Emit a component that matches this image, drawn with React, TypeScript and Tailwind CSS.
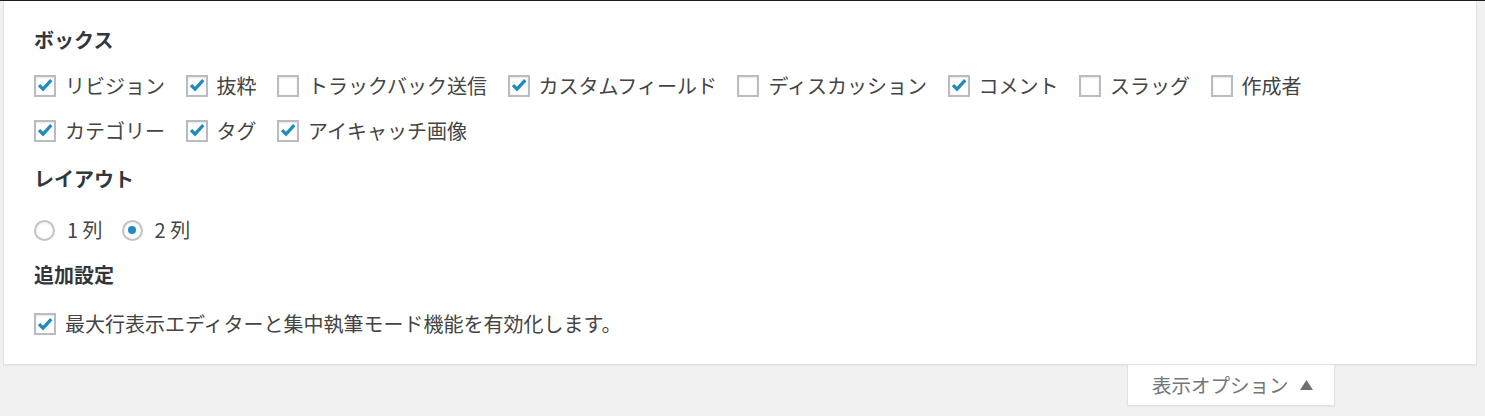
import React from "react";

const font = { fontFamily: '"Noto Sans CJK JP", "Noto Sans", sans-serif' };

const Check = () => (
  <svg viewBox="0 0 21 21" className="w-[19px] h-[19px]">
    <path d="M3.5 10 L8.2 14.8 L17.8 4.2" fill="none" stroke="#1e8cbe" strokeWidth="3.8" />
  </svg>
);

const Box = ({ label, checked }: { label: string; checked: boolean }) => (
  <label className="flex items-center mr-[20.5px]">
    <span className="w-[22px] h-[22px] border-2 border-[#b9bdc1] bg-white shadow-[inset_0_1px_2px_rgba(0,0,0,0.1)] flex items-center justify-center shrink-0">
      {checked && <Check />}
    </span>
    <span className="ml-[9px] whitespace-nowrap">{label}</span>
  </label>
);

const Radio = ({ label, checked }: { label: string; checked: boolean }) => (
  <label className="flex items-center mr-[19px]">
    <span className="w-[21px] h-[21px] rounded-full border-2 border-[#c1c4c7] bg-white shadow-[inset_0_1px_2px_rgba(0,0,0,0.1)] flex items-center justify-center shrink-0">
      {checked && <span className="w-[8px] h-[8px] rounded-full bg-[#1e8cbe]" />}
    </span>
    <span className="ml-[12px] whitespace-nowrap">{label}</span>
  </label>
);

const row1 = [
  { label: "リビジョン", checked: true },
  { label: "抜粋", checked: true },
  { label: "トラックバック送信", checked: false },
  { label: "カスタムフィールド", checked: true },
  { label: "ディスカッション", checked: false },
  { label: "コメント", checked: true },
  { label: "スラッグ", checked: false },
  { label: "作成者", checked: false },
];

const row2 = [
  { label: "カテゴリー", checked: true },
  { label: "タグ", checked: true },
  { label: "アイキャッチ画像", checked: true },
];

export default function App() {
  return (
    <div className="w-full h-[416px] bg-[#f1f1f1] overflow-hidden text-[20px] text-[#444]" style={font}>
      <div className="h-px bg-[#1d1d1d]" />
      {/* Screen options panel */}
      <div className="ml-[3px] mr-[8px] bg-white border border-t-0 border-[#e1e1e1] shadow-[0_1px_1px_rgba(0,0,0,0.04)] pl-[30px] pt-[27px] pb-[24px]">
        <h5 className="h-[24px] leading-[24px] font-bold text-[#32373c]">ボックス</h5>
        <div className="mt-[11px] flex h-[45px] items-center">
          {row1.map((b) => (
            <Box key={b.label} {...b} />
          ))}
        </div>
        <div className="flex h-[45px] items-center">
          {row2.map((b) => (
            <Box key={b.label} {...b} />
          ))}
        </div>

        <h5 className="mt-[14px] h-[24px] leading-[24px] font-bold text-[#32373c]">レイアウト</h5>
        <div className="mt-[23px] flex h-[32px] items-center">
          <Radio label="1 列" checked={false} />
          <Radio label="2 列" checked={true} />
        </div>

        <h5 className="mt-[17px] h-[24px] leading-[24px] font-bold text-[#32373c]">追加設定</h5>
        <div className="mt-[21px] flex h-[32px] items-center">
          <Box label="最大行表示エディターと集中執筆モード機能を有効化します。" checked={true} />
        </div>
      </div>

      {/* Tab */}
      <div className="flex justify-end mr-[150px]">
        <div className="w-[208px] h-[41px] bg-white border border-t-0 border-[#e1e1e1] shadow-[0_1px_1px_rgba(0,0,0,0.04)] flex items-center pl-[24px] text-[19.5px] text-[#72777c]">
          <span>表示オプション</span>
          <svg viewBox="0 0 13 10" className="ml-[11px] w-[13px] h-[10px]">
            <path d="M6.5 0 L13 10 L0 10 Z" fill="#6b7075" />
          </svg>
        </div>
      </div>
    </div>
  );
}
